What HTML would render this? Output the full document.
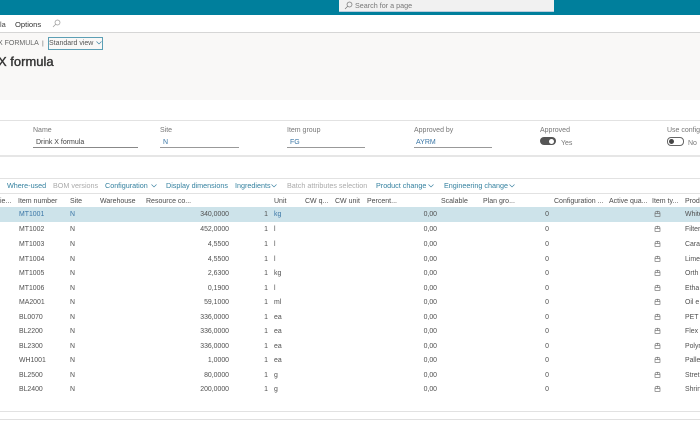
<!DOCTYPE html>
<html><head><meta charset="utf-8">
<style>
html,body{margin:0;padding:0;background:#fff}
#p{position:relative;width:700px;height:441px;overflow:hidden;background:#fff;font:7px "Liberation Sans",sans-serif;color:#505050;filter:blur(.3px)}
#p div,#p span,#p svg{position:absolute}
.t{white-space:nowrap;line-height:10px}
.b{color:#3a76a6}
.row{left:0;width:700px;height:14px}
.row span{top:3px;line-height:10px;white-space:nowrap;font-size:6.9px}
.i{left:19px}.s{left:70px}.q{right:471px}.n{right:432px}.u{left:274px}.pc{right:263px}.pr{right:151px}.d{left:685px}
.row svg{left:654px;top:3px}
.h span{top:197px;line-height:10px;white-space:nowrap;color:#4c4c4c;font-size:7px}
.tb span{top:181px;line-height:10px;white-space:nowrap;color:#33809f;font-size:7.2px}
.tb .g{color:#aaa}
.l{color:#777}
.ln{left:0;width:700px;height:1px}
.v{top:137.5px}
.lab{top:125.5px}
</style></head><body><div id="p">
<svg width="0" height="0"><symbol id="c" viewBox="0 0 7 8"><path fill="none" stroke="#666" stroke-width=".6" d="M1 3.2Q1 1.2 3.5 1.2T6 3.2V6.3H1ZM1 3.4H6M3.5 1.2V3.4"/></symbol><symbol id="v" viewBox="0 0 6 4"><path fill="none" stroke="#2f7a9c" stroke-width=".6" d="M.5.5L3 3L5.5.5"/></symbol></svg>
<div style="left:0;top:0;width:700px;height:15px;background:#007f9c"></div>
<div style="left:339px;top:0;width:215px;height:11px;background:#f1f1f1;border-bottom:1px solid #bcd"></div>
<svg style="left:344px;top:1px" width="9" height="9" viewBox="0 0 9 9" fill="none" stroke="#777" stroke-width=".7"><circle cx="5.5" cy="3.5" r="2.5"/><path d="M3.7 5.3L1 8"/></svg>
<span class="t" style="left:355px;top:1px;color:#777;font-size:7.2px">Search for a page</span>
<span class="t" style="left:0;top:20px;color:#444;font-size:7.4px">la</span>
<span class="t" style="left:15px;top:20px;color:#333;font-size:7.6px">Options</span>
<svg style="left:52px;top:19px" width="9" height="9" viewBox="0 0 9 9" fill="none" stroke="#999" stroke-width=".7"><circle cx="5.5" cy="3.5" r="2.5"/><path d="M3.7 5.3L1 8"/></svg>
<div class="ln" style="top:32px;background:#d6d6d6"></div>
<div style="left:0;top:33px;width:700px;height:67px;background:#f9f8f7"></div>
<span class="t" style="left:-2px;top:39px;color:#666;font-size:7px">X FORMULA</span>
<span class="t" style="left:42px;top:39px;color:#666;font-size:6.8px">|</span>
<div style="left:48px;top:37px;width:53px;height:11px;border:1px solid #5c9fb5;box-sizing:content-box"></div>
<span class="t" style="left:49px;top:39px;color:#555;font-size:7px">Standard view</span>
<svg style="left:96px;top:41px" width="6" height="4"><use href="#v"/></svg>
<span class="t" style="left:-2px;top:54px;color:#333;font-size:13px;line-height:16px;-webkit-text-stroke:.35px #333">X formula</span>

<div class="ln" style="top:120px;background:#e2e2e2"></div>
<div class="ln" style="top:155px;height:2px;background:#e6e6e6"></div>
<span class="t l lab" style="left:33px">Name</span>
<span class="t v" style="left:36px;color:#444">Drink X formula</span>
<div style="left:33px;top:147px;width:105px;height:1px;background:#888"></div>
<span class="t l lab" style="left:160px">Site</span>
<span class="t b v" style="left:163px">N</span>
<div style="left:160px;top:147px;width:79px;height:1px;background:#999"></div>
<span class="t l lab" style="left:287px">Item group</span>
<span class="t b v" style="left:290px">FG</span>
<div style="left:287px;top:147px;width:78px;height:1px;background:#999"></div>
<span class="t l lab" style="left:414px">Approved by</span>
<span class="t b v" style="left:416px">AYRM</span>
<div style="left:414px;top:147px;width:78px;height:1px;background:#999"></div>
<span class="t l lab" style="left:540px">Approved</span>
<div style="left:540px;top:137px;width:16px;height:8px;border-radius:4px;background:#555"></div>
<div style="left:549px;top:138.5px;width:5px;height:5px;border-radius:50%;background:#fff"></div>
<span class="t l" style="left:561px;top:138.5px">Yes</span>
<span class="t l lab" style="left:667px">Use config</span>
<div style="left:667px;top:137px;width:15px;height:7px;border-radius:4px;border:1px solid #666;background:#fff"></div>
<div style="left:669px;top:138.5px;width:5px;height:5px;border-radius:50%;background:#444"></div>
<span class="t l" style="left:688px;top:138.5px">No</span>

<div class="ln" style="top:178px;background:#e2e2e2"></div>
<div class="tb">
<span style="left:7px">Where-used</span>
<span class="g" style="left:53px">BOM versions</span>
<span style="left:105px">Configuration</span>
<span style="left:166px">Display dimensions</span>
<span style="left:235px">Ingredients</span>
<span class="g" style="left:287px">Batch attributes selection</span>
<span style="left:376px">Product change</span>
<span style="left:444px">Engineering change</span>
</div>
<svg style="left:151px;top:184px" width="6" height="4"><use href="#v"/></svg>
<svg style="left:271px;top:184px" width="6" height="4"><use href="#v"/></svg>
<svg style="left:428px;top:184px" width="6" height="4"><use href="#v"/></svg>
<svg style="left:509px;top:184px" width="6" height="4"><use href="#v"/></svg>
<div class="ln" style="top:193px;background:#e2e2e2"></div>
<div class="h">
<span style="left:0">ie...</span><span style="left:18px">Item number</span><span style="left:70px">Site</span><span style="left:100px">Warehouse</span><span style="left:146px">Resource co...</span><span style="right:471px">Quantity</span><span style="right:432px">Per series</span><span style="left:274px">Unit</span><span style="left:305px">CW q...</span><span style="left:335px">CW unit</span><span style="left:367px">Percent...</span><span style="right:263px">Percent</span><span style="left:441px">Scalable</span><span style="left:483px">Plan gro...</span><span style="right:149px">Priority</span><span style="left:554px">Configuration ...</span><span style="left:609px">Active qua...</span><span style="left:652px">Item ty...</span><span style="left:685px">Prod</span>
</div>

<div class="row" style="top:207px;height:15px;background:#cde3ea"><span class="i b">MT1001</span><span class="s b">N</span><span class="q">340,0000</span><span class="n">1</span><span class="u b">kg</span><span class="pc">0,00</span><span class="pr">0</span><svg width="7" height="8"><use href="#c"/></svg><span class="d">White</span></div>
<div class="row" style="top:222px"><span class="i">MT1002</span><span class="s">N</span><span class="q">452,0000</span><span class="n">1</span><span class="u">l</span><span class="pc">0,00</span><span class="pr">0</span><svg width="7" height="8"><use href="#c"/></svg><span class="d">Filter</span></div>
<div class="row" style="top:237px"><span class="i">MT1003</span><span class="s">N</span><span class="q">4,5500</span><span class="n">1</span><span class="u">l</span><span class="pc">0,00</span><span class="pr">0</span><svg width="7" height="8"><use href="#c"/></svg><span class="d">Cara</span></div>
<div class="row" style="top:251.5px"><span class="i">MT1004</span><span class="s">N</span><span class="q">4,5500</span><span class="n">1</span><span class="u">l</span><span class="pc">0,00</span><span class="pr">0</span><svg width="7" height="8"><use href="#c"/></svg><span class="d">Lime</span></div>
<div class="row" style="top:266px"><span class="i">MT1005</span><span class="s">N</span><span class="q">2,6300</span><span class="n">1</span><span class="u">kg</span><span class="pc">0,00</span><span class="pr">0</span><svg width="7" height="8"><use href="#c"/></svg><span class="d">Orth</span></div>
<div class="row" style="top:280.5px"><span class="i">MT1006</span><span class="s">N</span><span class="q">0,1900</span><span class="n">1</span><span class="u">l</span><span class="pc">0,00</span><span class="pr">0</span><svg width="7" height="8"><use href="#c"/></svg><span class="d">Etha</span></div>
<div class="row" style="top:295px"><span class="i">MA2001</span><span class="s">N</span><span class="q">59,1000</span><span class="n">1</span><span class="u">ml</span><span class="pc">0,00</span><span class="pr">0</span><svg width="7" height="8"><use href="#c"/></svg><span class="d">Oil e</span></div>
<div class="row" style="top:309.5px"><span class="i">BL0070</span><span class="s">N</span><span class="q">336,0000</span><span class="n">1</span><span class="u">ea</span><span class="pc">0,00</span><span class="pr">0</span><svg width="7" height="8"><use href="#c"/></svg><span class="d">PET p</span></div>
<div class="row" style="top:324px"><span class="i">BL2200</span><span class="s">N</span><span class="q">336,0000</span><span class="n">1</span><span class="u">ea</span><span class="pc">0,00</span><span class="pr">0</span><svg width="7" height="8"><use href="#c"/></svg><span class="d">Flex</span></div>
<div class="row" style="top:338.5px"><span class="i">BL2300</span><span class="s">N</span><span class="q">336,0000</span><span class="n">1</span><span class="u">ea</span><span class="pc">0,00</span><span class="pr">0</span><svg width="7" height="8"><use href="#c"/></svg><span class="d">Polyr</span></div>
<div class="row" style="top:353px"><span class="i">WH1001</span><span class="s">N</span><span class="q">1,0000</span><span class="n">1</span><span class="u">ea</span><span class="pc">0,00</span><span class="pr">0</span><svg width="7" height="8"><use href="#c"/></svg><span class="d">Palle</span></div>
<div class="row" style="top:367.5px"><span class="i">BL2500</span><span class="s">N</span><span class="q">80,0000</span><span class="n">1</span><span class="u">g</span><span class="pc">0,00</span><span class="pr">0</span><svg width="7" height="8"><use href="#c"/></svg><span class="d">Stret</span></div>
<div class="row" style="top:382px"><span class="i">BL2400</span><span class="s">N</span><span class="q">200,0000</span><span class="n">1</span><span class="u">g</span><span class="pc">0,00</span><span class="pr">0</span><svg width="7" height="8"><use href="#c"/></svg><span class="d">Shrin</span></div>

<div class="ln" style="top:411px;background:#e2e2e2"></div>
<div class="ln" style="top:419px;background:#e0e0e0"></div>
</div></body></html>
